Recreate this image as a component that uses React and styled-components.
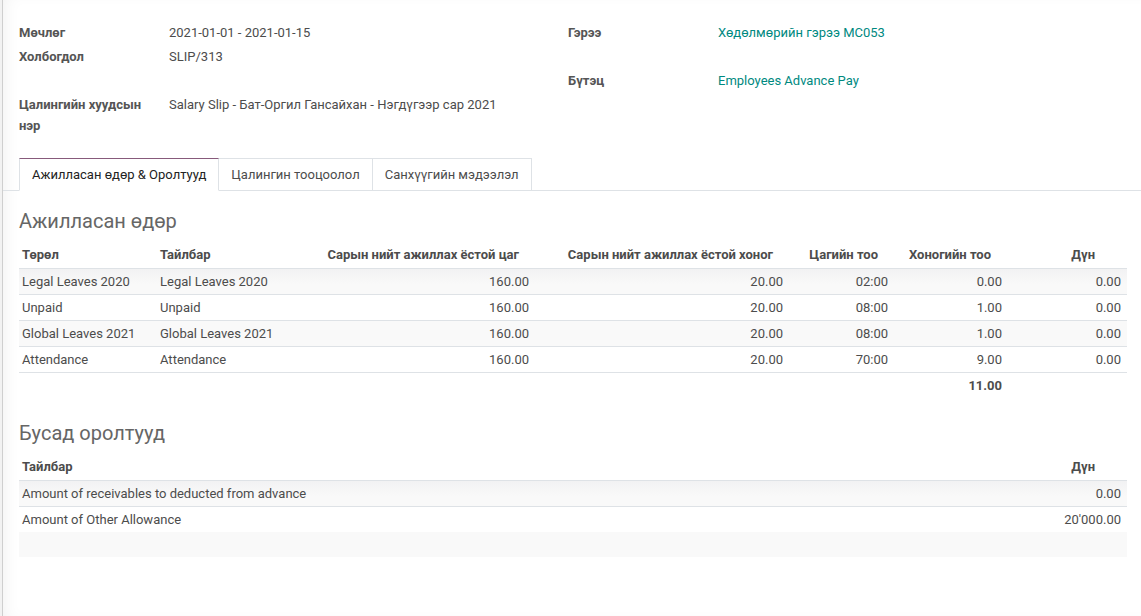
import React from 'react';
import styled, { createGlobalStyle } from 'styled-components';

const GlobalStyle = createGlobalStyle`
  html, body {
    margin: 0;
    padding: 0;
    background: #f2f2f2;
  }
  body {
    font-family: Roboto, 'Noto Sans', 'Liberation Sans', sans-serif;
    font-size: 13px;
    color: #4c4c4c;
  }
`;

const workedDays = [
  { type: 'Legal Leaves 2020', name: 'Legal Leaves 2020', hours: '160.00', days: '20.00', count: '02:00', dayCount: '0.00', amount: '0.00' },
  { type: 'Unpaid', name: 'Unpaid', hours: '160.00', days: '20.00', count: '08:00', dayCount: '1.00', amount: '0.00' },
  { type: 'Global Leaves 2021', name: 'Global Leaves 2021', hours: '160.00', days: '20.00', count: '08:00', dayCount: '1.00', amount: '0.00' },
  { type: 'Attendance', name: 'Attendance', hours: '160.00', days: '20.00', count: '70:00', dayCount: '9.00', amount: '0.00' },
];

const otherInputs = [
  { name: 'Amount of receivables to deducted from advance', amount: '0.00' },
  { name: 'Amount of Other Allowance', amount: "20'000.00" },
];

const tabs = ['Ажилласан өдөр & Оролтууд', 'Цалингин тооцоолол', 'Санхүүгийн мэдээлэл'];

function App() {
  return (
    <>
      <GlobalStyle />
      <Sheet>
        <FieldGroup>
          <FieldColumn>
            <Label>Мөчлөг</Label>
            <Value>2021-01-01 - 2021-01-15</Value>
            <Label>Холбогдол</Label>
            <Value>SLIP/313</Value>
            <Label></Label>
            <Value></Value>
            <Label>Цалингийн хуудсын нэр</Label>
            <Value>Salary Slip - Бат-Оргил Гансайхан - Нэгдүгээр сар 2021</Value>
          </FieldColumn>
          <FieldColumn>
            <Label>Гэрээ</Label>
            <Value $link>Хөдөлмөрийн гэрээ MC053</Value>
            <Label></Label>
            <Value></Value>
            <Label>Бүтэц</Label>
            <Value $link>Employees Advance Pay</Value>
          </FieldColumn>
        </FieldGroup>

        <TabBar>
          {tabs.map((t, i) => (
            <Tab key={t} $active={i === 0}>{t}</Tab>
          ))}
        </TabBar>

        <TabContent>
          <SectionTitle>Ажилласан өдөр</SectionTitle>
          <Table>
            <colgroup>
              <col style={{ width: 137 }} />
              <col style={{ width: 164 }} />
              <col style={{ width: 213 }} />
              <col style={{ width: 254 }} />
              <col style={{ width: 105 }} />
              <col style={{ width: 128 }} />
              <col />
            </colgroup>
            <thead>
              <tr>
                <Th $pl={3}>Төрөл</Th>
                <Th>Тайлбар</Th>
                <Th $right $pr={14}>Сарын нийт ажиллах ёстой цаг</Th>
                <Th $right $pr={14}>Сарын нийт ажиллах ёстой хоног</Th>
                <Th $right $pr={14}>Цагийн тоо</Th>
                <Th $pl={17}>Хоногийн тоо</Th>
                <Th $right $pr={32}>Дүн</Th>
              </tr>
            </thead>
            <tbody>
              {workedDays.map((r) => (
                <Row key={r.type}>
                  <Td $pl={3}>{r.type}</Td>
                  <Td>{r.name}</Td>
                  <Td $right>{r.hours}</Td>
                  <Td $right>{r.days}</Td>
                  <Td $right>{r.count}</Td>
                  <Td $right $pr={18}>{r.dayCount}</Td>
                  <Td $right $pr={6}>{r.amount}</Td>
                </Row>
              ))}
            </tbody>
            <tfoot>
              <tr>
                <FootTd />
                <FootTd />
                <FootTd />
                <FootTd />
                <FootTd />
                <FootTd $right $pr={18}>11.00</FootTd>
                <FootTd />
              </tr>
            </tfoot>
          </Table>

          <SectionTitle $gap>Бусад оролтууд</SectionTitle>
          <Table>
            <colgroup>
              <col />
              <col style={{ width: 150 }} />
            </colgroup>
            <thead>
              <tr>
                <Th $pl={3}>Тайлбар</Th>
                <Th $right $pr={32}>Дүн</Th>
              </tr>
            </thead>
            <tbody>
              {otherInputs.map((r) => (
                <Row key={r.name}>
                  <Td $pl={3}>{r.name}</Td>
                  <Td $right $pr={6}>{r.amount}</Td>
                </Row>
              ))}
              <Row $filler>
                <Td $filler />
                <Td $filler />
              </Row>
            </tbody>
          </Table>
        </TabContent>
      </Sheet>
    </>
  );
}

const Sheet = styled.div`
  margin-left: 2px;
  min-height: 100vh;
  box-sizing: border-box;
  background: #ffffff;
  border-left: 1px solid #cfcfcf;
  box-shadow: inset 10px 0 18px -10px rgba(0, 0, 0, 0.07);
`;

const FieldGroup = styled.div`
  display: grid;
  grid-template-columns: 549px 1fr;
  padding: 20px 14px 0 16px;
`;

const FieldColumn = styled.div`
  display: grid;
  grid-template-columns: 150px 1fr;
  grid-auto-rows: minmax(24px, auto);
  align-content: start;
`;

const Label = styled.div`
  font-weight: 700;
  color: #555;
  line-height: 21px;
  padding: 1.5px 15px 1.5px 0;
`;

const Value = styled.div`
  line-height: 21px;
  padding: 1.5px 0;
  color: ${(p) => (p.$link ? '#00897f' : '#4c4c4c')};
`;

const TabBar = styled.div`
  display: flex;
  margin-top: 21px;
  padding-left: 16px;
  border-bottom: 1px solid #dee2e6;
`;

const Tab = styled.div`
  padding: 5px 12px;
  line-height: 21px;
  margin-bottom: -1px;
  border: 1px solid #dee2e6;
  border-top-color: ${(p) => (p.$active ? '#875a7b' : '#dee2e6')};
  border-bottom-color: ${(p) => (p.$active ? '#ffffff' : '#dee2e6')};
  border-left-width: ${(p) => (p.$active ? '1px' : '0')};
  background: #ffffff;
  color: ${(p) => (p.$active ? '#222' : '#4c4c4c')};
  white-space: nowrap;
`;

const TabContent = styled.div`
  padding: 15px 14px 0 16px;
`;

const SectionTitle = styled.div`
  font-size: 20px;
  line-height: 30px;
  color: #666;
  margin-top: ${(p) => (p.$gap ? '20px' : '0')};
  margin-bottom: 5px;
`;

const Table = styled.table`
  width: 100%;
  border-collapse: collapse;
  table-layout: fixed;
`;

const Th = styled.th`
  font-weight: 700;
  color: #4c4c4c;
  line-height: 21px;
  padding: 3px ${(p) => p.$pr ?? 4}px 3px ${(p) => p.$pl ?? 4}px;
  text-align: ${(p) => (p.$right ? 'right' : 'left')};
  white-space: nowrap;
  overflow: visible;
  border-bottom: 1px solid #dee2e6;
`;

const Row = styled.tr`
  &:nth-child(odd) {
    background: #f9f9f9;
  }
  &:first-child {
    background: linear-gradient(#f2f2f3, #f9f9f9 60%);
  }
`;

const Td = styled.td`
  line-height: 21px;
  height: 21px;
  padding: 2px ${(p) => p.$pr ?? 4}px 2px ${(p) => p.$pl ?? 4}px;
  text-align: ${(p) => (p.$right ? 'right' : 'left')};
  white-space: nowrap;
  border-top: ${(p) => (p.$filler ? 'none' : '1px solid #dee2e6')};
`;

const FootTd = styled.td`
  line-height: 21px;
  padding: 2px ${(p) => p.$pr ?? 4}px 2px 4px;
  text-align: ${(p) => (p.$right ? 'right' : 'left')};
  font-weight: 700;
  border-top: 1px solid #dee2e6;
`;

export default App;
